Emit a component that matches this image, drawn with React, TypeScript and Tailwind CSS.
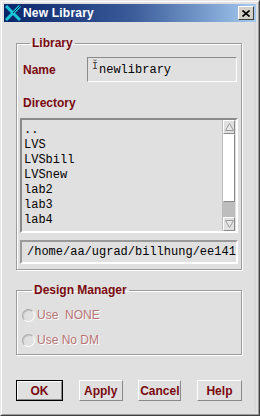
import React from 'react';

const labelFont = { fontFamily: '"Liberation Sans", Arial, sans-serif' };
const monoFont = { fontFamily: '"Liberation Mono", "Courier New", monospace' };

const dirs = ['..', 'LVS', 'LVSbill', 'LVSnew', 'lab2', 'lab3', 'lab4'];

const Radio: React.FC<{ label: string }> = ({ label }) => (
  <div className="flex items-center h-[14px] gap-[2px]">
    <span className="w-[13px] h-[13px] rounded-full border border-t-[#a8a8a8] border-l-[#a8a8a8] border-b-white border-r-white bg-[#e0e0e0] shadow-[inset_1px_1px_0_#c8c8c8]" />
    <span className="text-[12px] text-[#b87474] whitespace-pre [text-shadow:1px_1px_0_#ffffff]">{label}</span>
  </div>
);

const Btn: React.FC<{ label: string; w: string; def?: boolean }> = ({ label, w, def }) => (
  <div className={`${w} ${def ? 'border border-black' : ''}`}>
    <div className="h-full border border-t-white border-l-white border-b-[#8a8a8a] border-r-[#8a8a8a] flex items-center justify-center text-[12px] font-bold text-[#7a0a10]">
      {label}
    </div>
  </div>
);

export default function App() {
  return (
    <div className="w-[260px] h-[416px] bg-[#e0e0e0] border border-t-[#e8e8e8] border-l-[#e8e8e8] border-r-[#404040] border-b-[#404040] flex flex-col" style={labelFont}>
      <div className="flex-1 flex flex-col border border-t-white border-l-white border-r-[#9a9a9a] border-b-[#9a9a9a] p-[2px]">
        {/* title bar */}
        <div className="h-[18px] flex items-center pl-[1px] pr-[2px] bg-gradient-to-r from-[#0a246a] via-[#3a5a98] to-[#a6caf0]">
          <svg width="16" height="16" viewBox="0 0 16 16">
            <path d="M1 1 L15 15 M15 1 L1 15" stroke="#18c8d8" strokeWidth="3" />
            <path d="M8 8 L15 1" stroke="#0a2050" strokeWidth="1" />
          </svg>
          <span className="ml-[2px] text-white font-bold text-[12px] tracking-[0.2px]">New Library</span>
          <div className="ml-auto w-[16px] h-[14px] bg-[#d4d0c8] border border-t-white border-l-white border-b-[#404040] border-r-[#404040] flex items-center justify-center">
            <svg width="8" height="7" viewBox="0 0 8 7">
              <path d="M0.5 0.5 L7.5 6.5 M7.5 0.5 L0.5 6.5" stroke="black" strokeWidth="1.6" />
            </svg>
          </div>
        </div>

        {/* body */}
        <div className="flex-1 flex flex-col px-[12px] pt-[14px] border-r-2 border-[#d8d8d8]">
          <fieldset className="border border-[#9c9c9c] shadow-[1px_1px_0_#ffffff,inset_1px_1px_0_#ffffff] px-[3px] pb-[5px] pt-[7px] m-0 min-w-0">
            <legend className="ml-[10px] px-[2px] text-[12px] font-bold leading-[14px] text-[#7a0a10]">Library</legend>

            <div className="flex items-center">
              <span className="w-[67px] pl-[3px] text-[12px] font-bold text-[#7a0a10]">Name</span>
              <div className="flex-1 mr-[1px] h-[25px] border border-t-[#8a8a8a] border-l-[#8a8a8a] border-b-white border-r-white flex items-center pl-[4px]">
                <span className="text-[10px] text-[#333] mr-[1px] -mt-[6px]" style={monoFont}>Ĭ</span>
                <span className="text-[12px] text-black" style={monoFont}>newlibrary</span>
              </div>
            </div>

            <div className="mt-[14px] pl-[3px] h-[14px] leading-[14px] text-[12px] font-bold text-[#7a0a10]">Directory</div>

            <div className="mt-[8px] h-[115px] border-2 border-t-[#8a8a8a] border-l-[#8a8a8a] border-b-white border-r-white flex">
              <div className="flex-1 pl-[2px] pt-[3px] text-[12px] leading-[15px] text-black" style={monoFont}>
                {dirs.map((d) => (
                  <div key={d}>{d}</div>
                ))}
              </div>
              <div className="w-[13px] mr-[1px] flex flex-col border-l border-[#bcbcbc]">
                <div className="h-[14px] border border-t-white border-l-white border-b-[#8a8a8a] border-r-[#8a8a8a] flex items-center justify-center">
                  <svg width="9" height="8" viewBox="0 0 9 8"><path d="M4.5 0.5 L8.5 7.5 L0.5 7.5 Z" fill="#e8e8e8" stroke="#9a9a9a" strokeWidth="1" /></svg>
                </div>
                <div className="h-[68px] bg-white border border-t-white border-l-white border-b-[#8a8a8a] border-r-[#8a8a8a]" />
                <div className="flex-1 bg-[#bdbdbd]" />
                <div className="h-[14px] border border-t-white border-l-white border-b-[#8a8a8a] border-r-[#8a8a8a] flex items-center justify-center">
                  <svg width="9" height="8" viewBox="0 0 9 8"><path d="M4.5 7.5 L8.5 0.5 L0.5 0.5 Z" fill="#e8e8e8" stroke="#9a9a9a" strokeWidth="1" /></svg>
                </div>
              </div>
            </div>

            <div className="mt-[7px] h-[24px] border-2 border-t-[#9a9a9a] border-l-[#9a9a9a] border-b-white border-r-white flex items-center pl-[5px] overflow-hidden whitespace-nowrap">
              <span className="text-[12px] text-black" style={monoFont}>/home/aa/ugrad/billhung/ee141</span>
            </div>
          </fieldset>

          <fieldset className="mt-[13px] border border-[#9c9c9c] shadow-[1px_1px_0_#ffffff,inset_1px_1px_0_#ffffff] px-[5px] pt-[11px] pb-[7px] m-0 min-w-0 flex flex-col gap-[11px]">
            <legend className="ml-[10px] px-[2px] text-[12px] font-bold leading-[14px] text-[#7a0a10]">Design Manager</legend>
            <Radio label="Use  NONE" />
            <Radio label="Use No DM" />
          </fieldset>

          <div className="mt-[25px] h-[21px] flex justify-between">
            <Btn label="OK" w="w-[47px]" def />
            <Btn label="Apply" w="w-[44px]" />
            <Btn label="Cancel" w="w-[43px]" />
            <Btn label="Help" w="w-[45px]" />
          </div>
        </div>
      </div>
    </div>
  );
}
